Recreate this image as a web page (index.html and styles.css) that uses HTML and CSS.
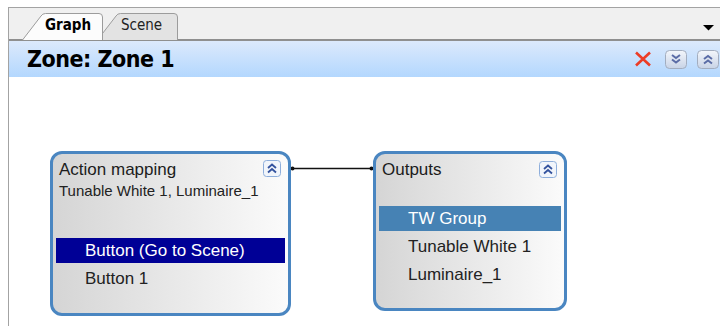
FILE: index.html
```html
<!DOCTYPE html>
<html lang="en">
<head>
    <meta charset="UTF-8">
    <meta name="viewport" content="width=device-width, initial-scale=1.0">
    <title>Zone Graph</title>
    <link rel="stylesheet" href="styles.css">
</head>
<body>
    <div class="panel">
        <!-- Tab strip -->
        <div class="tabbar">
            <div class="tabs">
                <div class="tab tab-active">
                    <svg class="tab-shape" width="81" height="27" viewBox="0 0 81 27">
                        <path d="M0.5 27 L19 3 Q20.5 0.5 23.5 0.5 L77 0.5 Q80.5 0.5 80.5 4 L80.5 27" fill="#fcfcfc" stroke="#9c9c9c"/>
                    </svg>
                    <span class="tab-label">Graph</span>
                </div>
                <div class="tab tab-scene">
                    <svg class="tab-shape" width="81" height="27" viewBox="0 0 81 27">
                        <path d="M0.5 27 L19 3 Q20.5 0.5 23.5 0.5 L77 0.5 Q80.5 0.5 80.5 4 L80.5 27" fill="#e3e3e3" stroke="#9c9c9c"/>
                    </svg>
                    <span class="tab-label">Scene</span>
                </div>
            </div>
            <svg class="dropdown" width="11" height="6" viewBox="0 0 11 6">
                <path d="M0 0 H11 L5.5 5.5 Z" fill="#000"/>
            </svg>
        </div>

        <!-- Zone header -->
        <div class="zone-header">
            <h1 class="zone-title">Zone: Zone 1</h1>
            <div class="zone-tools">
                <svg class="tool-close" width="18" height="16" viewBox="0 0 18 16">
                    <path d="M2 1.5 L16 14.5 M16 1.5 L2 14.5" stroke="#ec3c26" stroke-width="2.6" fill="none"/>
                </svg>
                <svg class="tool-btn tool-down" width="22" height="19" viewBox="0 0 22 19">
                    <defs>
                        <linearGradient id="btnDown" x1="0" y1="0" x2="0" y2="1">
                            <stop offset="0" stop-color="#f3f6fb"/>
                            <stop offset="1" stop-color="#c8d3e6"/>
                        </linearGradient>
                    </defs>
                    <rect x="0.5" y="0.5" width="21" height="18" rx="4" fill="url(#btnDown)" stroke="#a2adbf"/>
                    <path d="M7 5 L11 8 L15 5 M7 9.5 L11 12.5 L15 9.5" fill="none" stroke="#5a6ca6" stroke-width="2"/>
                </svg>
                <svg class="tool-btn" width="22" height="19" viewBox="0 0 22 19">
                    <defs>
                        <linearGradient id="btnUp" x1="0" y1="0" x2="0" y2="1">
                            <stop offset="0" stop-color="#f3f6fb"/>
                            <stop offset="1" stop-color="#c8d3e6"/>
                        </linearGradient>
                    </defs>
                    <rect x="0.5" y="0.5" width="21" height="18" rx="4" fill="url(#btnUp)" stroke="#a2adbf"/>
                    <path d="M7 9 L11 6 L15 9 M7 13.5 L11 10.5 L15 13.5" fill="none" stroke="#5a6ca6" stroke-width="2"/>
                </svg>
            </div>
        </div>

        <!-- Graph canvas -->
        <div class="canvas">
            <svg class="link" width="84" height="7" viewBox="0 0 84 7">
                <line x1="2" y1="3.5" x2="82" y2="3.5" stroke="#111" stroke-width="1.3"/>
                <circle cx="2.5" cy="3.5" r="2" fill="#111"/>
                <circle cx="81.5" cy="3.5" r="2" fill="#111"/>
            </svg>

            <div class="node node-action">
                <div class="node-head">
                    <span class="node-title">Action mapping</span>
                    <svg class="node-toggle" width="18" height="17" viewBox="0 0 18 17">
                        <rect x="0.5" y="0.5" width="17" height="16" rx="3" fill="#f1f5fb" stroke="#8eaedb"/>
                        <path d="M5 8 L9 4.5 L13 8 M5 12.5 L9 9 L13 12.5" fill="none" stroke="#34539e" stroke-width="1.8"/>
                    </svg>
                </div>
                <div class="node-sub">Tunable White 1, Luminaire_1</div>
                <ul class="node-list">
                    <li class="node-row row-picked">Button (Go to Scene)</li>
                    <li class="node-row">Button 1</li>
                </ul>
            </div>

            <div class="node node-outputs">
                <div class="node-head">
                    <span class="node-title">Outputs</span>
                    <svg class="node-toggle toggle-low" width="18" height="17" viewBox="0 0 18 17">
                        <rect x="0.5" y="0.5" width="17" height="16" rx="3" fill="#f1f5fb" stroke="#8eaedb"/>
                        <path d="M5 8 L9 4.5 L13 8 M5 12.5 L9 9 L13 12.5" fill="none" stroke="#34539e" stroke-width="1.8"/>
                    </svg>
                </div>
                <ul class="node-list">
                    <li class="node-row row-current">TW Group</li>
                    <li class="node-row">Tunable White 1</li>
                    <li class="node-row">Luminaire_1</li>
                </ul>
            </div>
        </div>
    </div>
</body>
</html>
```

FILE: styles.css
```css
/* Zone graph editor */
body {
    margin: 0;
    padding: 0;
    background-color: #ffffff;
    font-family: "Liberation Sans", Arial, sans-serif;
}

.panel {
    margin: 7px 0 0 8px;
    height: 319px;
    box-sizing: border-box;
    border-left: 1px solid #a3a3a3;
    border-top: 1px solid #a3a3a3;
    overflow: hidden;
}

/* Tabs */
.tabbar {
    height: 31px;
    background-color: #f0f0f0;
    border-bottom: 2px solid #8f8f8f;
    display: flex;
    justify-content: space-between;
    align-items: flex-end;
}

.tabs {
    display: flex;
    padding-left: 13px;
}

.tab {
    position: relative;
    width: 81px;
    height: 26px;
    font-family: "DejaVu Sans Condensed", "DejaVu Sans", sans-serif;
    font-size: 15px;
}

.tab-shape {
    position: absolute;
    left: 0;
    top: 0;
}

.tab-active {
    z-index: 2;
}

.tab-scene {
    margin-left: -6px;
    z-index: 1;
}

.tab-label {
    position: relative;
    display: block;
    padding: 1px 0 0 23px;
    line-height: 22px;
    color: #222;
}

.tab-active .tab-label {
    font-weight: bold;
    color: #000;
}

.tab-scene .tab-label {
    padding-left: 24px;
}

.dropdown {
    align-self: flex-start;
    margin: 17px 6px 0 0;
}

/* Zone header */
.zone-header {
    height: 36px;
    background: linear-gradient(#dce9fc, #b3d7fe);
    display: flex;
    justify-content: space-between;
    align-items: center;
    padding: 0 1px 0 18px;
}

.zone-title {
    margin: 0;
    font-family: "DejaVu Sans Condensed", "DejaVu Sans", sans-serif;
    font-size: 23px;
    font-weight: bold;
    letter-spacing: -0.5px;
    color: #000;
}

.zone-tools {
    display: flex;
    align-items: center;
}

.tool-close {
    margin-right: 13px;
}

.tool-down {
    margin-right: 10px;
}

/* Canvas and nodes */
.canvas {
    position: relative;
    height: 249px;
}

.link {
    position: absolute;
    left: 281px;
    top: 88px;
}

.node {
    position: absolute;
    box-sizing: border-box;
    border: 3px solid #4a86c1;
    border-radius: 12px;
    background: linear-gradient(to right, #d5d5d5, #fbfbfb);
}

.node-action {
    left: 41px;
    top: 74px;
    width: 241px;
    height: 165px;
}

.node-outputs {
    left: 364px;
    top: 74px;
    width: 194px;
    height: 160px;
}

.node-head {
    display: flex;
    justify-content: space-between;
    align-items: flex-start;
    padding: 6px 7px 0 6px;
}

.node-title {
    font-size: 17px;
    line-height: 20px;
    color: #1c1c1c;
}

.toggle-low {
    margin-top: 1px;
}

.node-sub {
    font-size: 15px;
    line-height: 18px;
    margin: 2px 0 0 6px;
    padding-bottom: 12px;
    color: #222;
}

.node-list {
    list-style: none;
    margin: 26px 3px 0;
    padding: 0;
}

.node-row {
    height: 25px;
    line-height: 25px;
    margin-bottom: 3px;
    padding-left: 29px;
    font-size: 17px;
    color: #222;
}

.row-picked {
    background-color: #000096;
    color: #ffffff;
}

.row-current {
    background-color: #4682b4;
    color: #ffffff;
}
```
